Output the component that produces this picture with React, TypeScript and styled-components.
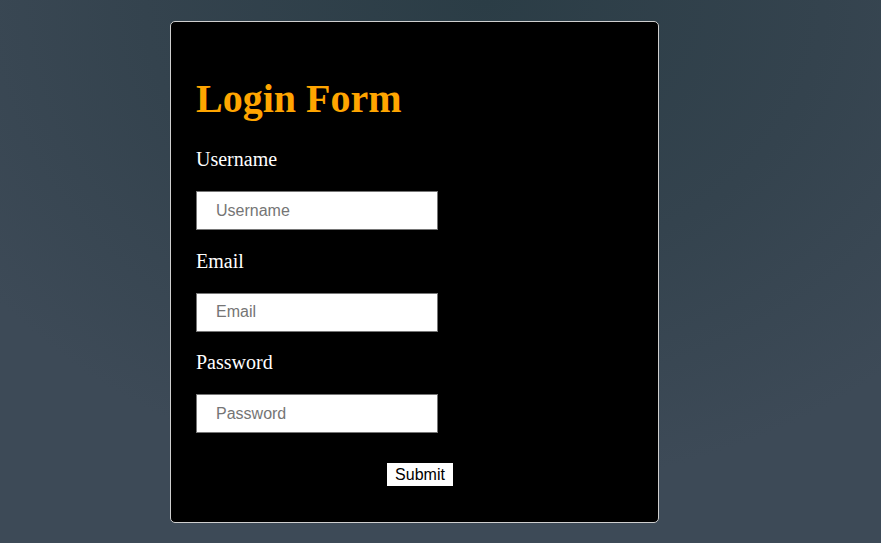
import React from "react";
import styled, { createGlobalStyle } from "styled-components";

const GlobalStyle = createGlobalStyle`
  html, body {
    margin: 0;
    padding: 0;
  }
  body {
    min-height: 543px;
    background: radial-gradient(ellipse 70% 90% at 55% 0%, #2b3d46 0%, #34434e 55%, #3d4a57 100%);
    font-family: "Liberation Serif", "Times New Roman", serif;
  }
`;

const Page = styled.div`
  padding: 21px 0 21px 170px;
`;

const Card = styled.form`
  width: 489px;
  box-sizing: border-box;
  background: #000;
  border: 1px solid #cfcfcf;
  border-radius: 5px;
  padding: 54px 14px 36px 25px;
  display: flex;
  flex-direction: column;
`;

const Title = styled.h1`
  margin: 0 0 26px;
  font-family: "Liberation Serif", "Times New Roman", serif;
  font-weight: bold;
  font-size: 40px;
  line-height: 46px;
  color: #ffa500;
`;

const Fields = styled.div`
  display: flex;
  flex-direction: column;
`;

const Field = styled.div`
  display: flex;
  flex-direction: column;
  align-items: flex-start;
  gap: 20px;
  & + & {
    margin-top: 19.5px;
  }
`;

const Label = styled.label`
  display: block;
  color: #fff;
  font-size: 20px;
  line-height: 23px;
`;

const Input = styled.input`
  box-sizing: border-box;
  width: 242px;
  height: 39px;
  padding: 0 19px;
  border: 1px solid #767676;
  background: #fff;
  font-family: "Liberation Sans", Arial, sans-serif;
  font-size: 16px;
  color: #000;
  outline: none;
  &::placeholder {
    color: #757575;
  }
`;

const Actions = styled.div`
  display: flex;
  justify-content: center;
  margin-top: 30px;
`;

const SubmitButton = styled.button`
  height: 23px;
  padding: 0 8px;
  border: none;
  background: #fff;
  color: #000;
  font-family: "Liberation Sans", Arial, sans-serif;
  font-size: 16px;
  line-height: 23px;
  cursor: pointer;
`;

const fields = [
  { id: "username", label: "Username", type: "text" },
  { id: "email", label: "Email", type: "email" },
  { id: "password", label: "Password", type: "password" },
];

export default function App() {
  return (
    <>
      <GlobalStyle />
      <Page>
        <Card onSubmit={(e) => e.preventDefault()}>
          <Title>Login Form</Title>
          <Fields>
            {fields.map((f) => (
              <Field key={f.id}>
                <Label htmlFor={f.id}>{f.label}</Label>
                <Input id={f.id} type={f.type} placeholder={f.label} />
              </Field>
            ))}
          </Fields>
          <Actions>
            <SubmitButton type="submit">Submit</SubmitButton>
          </Actions>
        </Card>
      </Page>
    </>
  );
}
